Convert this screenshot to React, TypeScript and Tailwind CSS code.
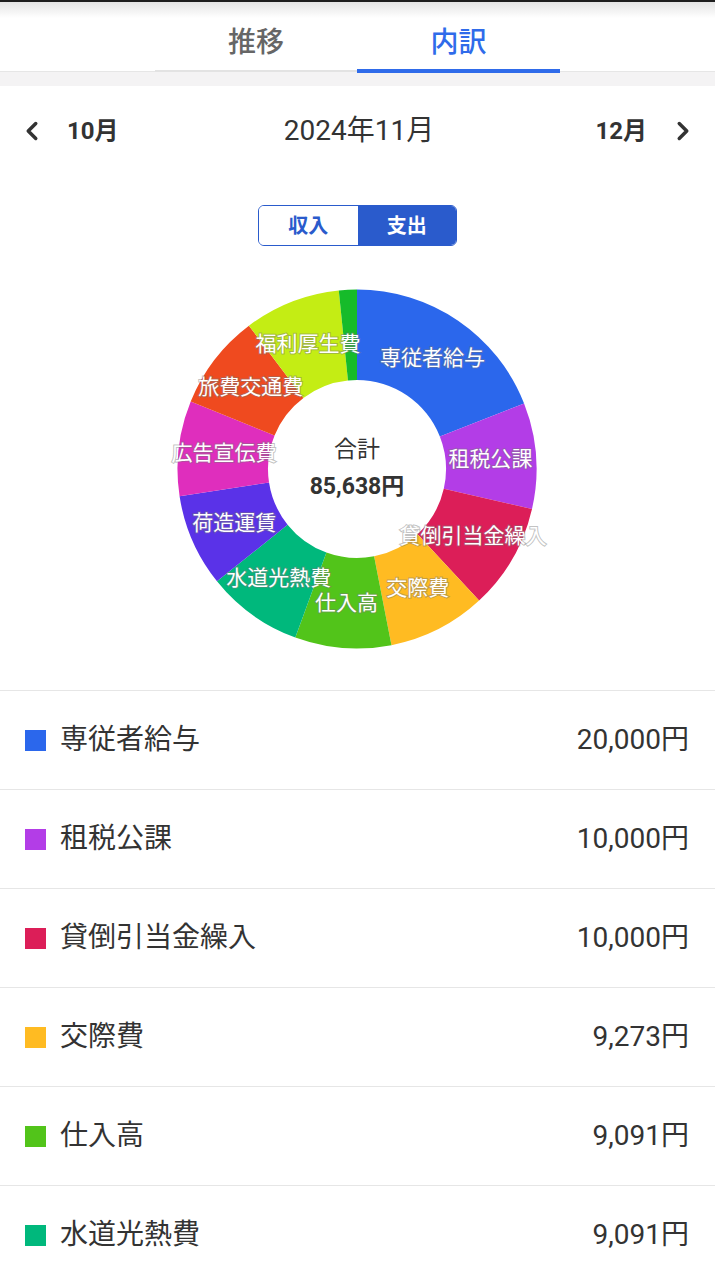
import React from "react";
import { ChevronLeft, ChevronRight } from "lucide-react";

const font = { fontFamily: "Roboto, 'Noto Sans CJK JP', 'Noto Sans', sans-serif" };

const slices = [
  { name: "専従者給与", value: 20000, color: "#2b67ec" },
  { name: "租税公課", value: 10000, color: "#b33de7" },
  { name: "貸倒引当金繰入", value: 10000, color: "#dc1e58" },
  { name: "交際費", value: 9273, color: "#ffbb22" },
  { name: "仕入高", value: 9091, color: "#52c41a" },
  { name: "水道光熱費", value: 9091, color: "#00b87c" },
  { name: "荷造運賃", value: 8750, color: "#5a32e8" },
  { name: "広告宣伝費", value: 9000, color: "#df2ebd" },
  { name: "旅費交通費", value: 9000, color: "#ef4a1f" },
  { name: "福利厚生費", value: 9100, color: "#c4ed14" },
  { name: "通信費", value: 1700, color: "#16bb2a" },
];

const CX = 180;
const CY = 180;
const R = 179.5;
const r = 89;

const pt = (rad: number, deg: number) => {
  const a = (deg * Math.PI) / 180;
  return [CX + rad * Math.sin(a), CY - rad * Math.cos(a)];
};

const arcPath = (a0: number, a1: number) => {
  const large = a1 - a0 > 180 ? 1 : 0;
  const [x0, y0] = pt(R, a0);
  const [x1, y1] = pt(R, a1);
  const [x2, y2] = pt(r, a1);
  const [x3, y3] = pt(r, a0);
  return `M${x0} ${y0} A${R} ${R} 0 ${large} 1 ${x1} ${y1} L${x2} ${y2} A${r} ${r} 0 ${large} 0 ${x3} ${y3} Z`;
};

const Donut = () => {
  const total = slices.reduce((s, x) => s + x.value, 0);
  let acc = 0;
  const parts = slices.map((s) => {
    const a0 = (acc / total) * 360;
    acc += s.value;
    const a1 = (acc / total) * 360;
    return { ...s, a0, a1 };
  });
  return (
    <svg width={360} height={360} viewBox="0 0 360 360" className="overflow-visible -translate-x-[1px]">
      {parts.map((p) => (
        <path key={p.name} d={arcPath(p.a0, p.a1)} fill={p.color} />
      ))}
      {parts
        .filter((p) => p.a1 - p.a0 > 15)
        .map((p) => {
          const [x, y] = pt(134, (p.a0 + p.a1) / 2);
          return (
            <text
              key={p.name + "-l"}
              x={x}
              y={y}
              textAnchor="middle"
              dominantBaseline="central"
              fontSize={21}
              fill="#ffffff"
              stroke="rgba(120,120,120,0.45)"
              strokeWidth={2}
              paintOrder="stroke"
              style={font}
            >
              {p.name}
            </text>
          );
        })}
      <text x={CX} y={CY - 20} textAnchor="middle" dominantBaseline="central" fontSize={23} fill="#333333" style={font}>
        合計
      </text>
      <text
        x={CX}
        y={CY + 17}
        textAnchor="middle"
        dominantBaseline="central"
        fontSize={23}
        fontWeight={700}
        fill="#333333"
        style={font}
      >
        85,638円
      </text>
    </svg>
  );
};

const rows = [
  { name: "専従者給与", amount: "20,000円", color: "#2b67ec" },
  { name: "租税公課", amount: "10,000円", color: "#b33de7" },
  { name: "貸倒引当金繰入", amount: "10,000円", color: "#dc1e58" },
  { name: "交際費", amount: "9,273円", color: "#ffbb22" },
  { name: "仕入高", amount: "9,091円", color: "#52c41a" },
  { name: "水道光熱費", amount: "9,091円", color: "#00b87c" },
];

export default function App() {
  return (
    <div className="w-[715px] bg-white text-[#333333]" style={font}>
      {/* top edge */}
      <div className="h-[2px] bg-[#1e1e1e]" />
      {/* tabs */}
      <div className="h-[70px] flex justify-center border-b border-[#e6e6e6] bg-[linear-gradient(to_bottom,#e4e4e4_0px,#ffffff_16px)]">
        <div className="relative w-[202px] flex items-center justify-center pt-[12px] text-[28px] font-medium text-[#666666]">
          推移
          <span className="absolute left-0 right-0 bottom-[-1px] h-[2px] bg-[#e3e3e3]" />
        </div>
        <div className="relative w-[203px] flex items-center justify-center pt-[12px] text-[28px] font-medium text-[#2f6bea]">
          内訳
          <span className="absolute left-0 right-0 bottom-[-2px] h-[4px] bg-[#2f6bea]" />
        </div>
      </div>
      <div className="h-[14px] bg-[#f4f3f4]" />

      {/* month nav */}
      <div className="h-[90px] flex items-center justify-between px-[17px]">
        <div className="flex items-center gap-[20px]">
          <ChevronLeft size={30} strokeWidth={2.8} color="#333333" />
          <span className="text-[24px] font-bold">10月</span>
        </div>
        <span className="text-[28px] pl-[4px]">2024年11月</span>
        <div className="flex items-center gap-[21px]">
          <span className="text-[24px] font-bold">12月</span>
          <ChevronRight size={30} strokeWidth={2.8} color="#333333" />
        </div>
      </div>

      {/* toggle */}
      <div className="mt-[29px] flex justify-center">
        <div className="w-[199px] h-[41px] flex rounded-[6px] border border-[#2a5bcc] overflow-hidden text-[20px] font-bold">
          <div className="flex-1 flex items-center justify-center bg-white text-[#2a5bcc]">収入</div>
          <div className="flex-1 flex items-center justify-center bg-[#2a5bcc] text-white">支出</div>
        </div>
      </div>

      {/* donut */}
      <div className="mt-[43px] flex justify-center">
        <Donut />
      </div>

      {/* list */}
      <div className="mt-[41px] border-t border-[#e6e6e6]">
        {rows.map((row) => (
          <div key={row.name} className="h-[99px] flex items-center border-b border-[#e6e6e6] pl-[25px] pr-[26px]">
            <span className="w-[21px] h-[21px] shrink-0" style={{ backgroundColor: row.color }} />
            <span className="ml-[14px] text-[28px] text-[#333333]">{row.name}</span>
            <span className="ml-auto text-[28px] text-[#333333]">{row.amount}</span>
          </div>
        ))}
      </div>
    </div>
  );
}
